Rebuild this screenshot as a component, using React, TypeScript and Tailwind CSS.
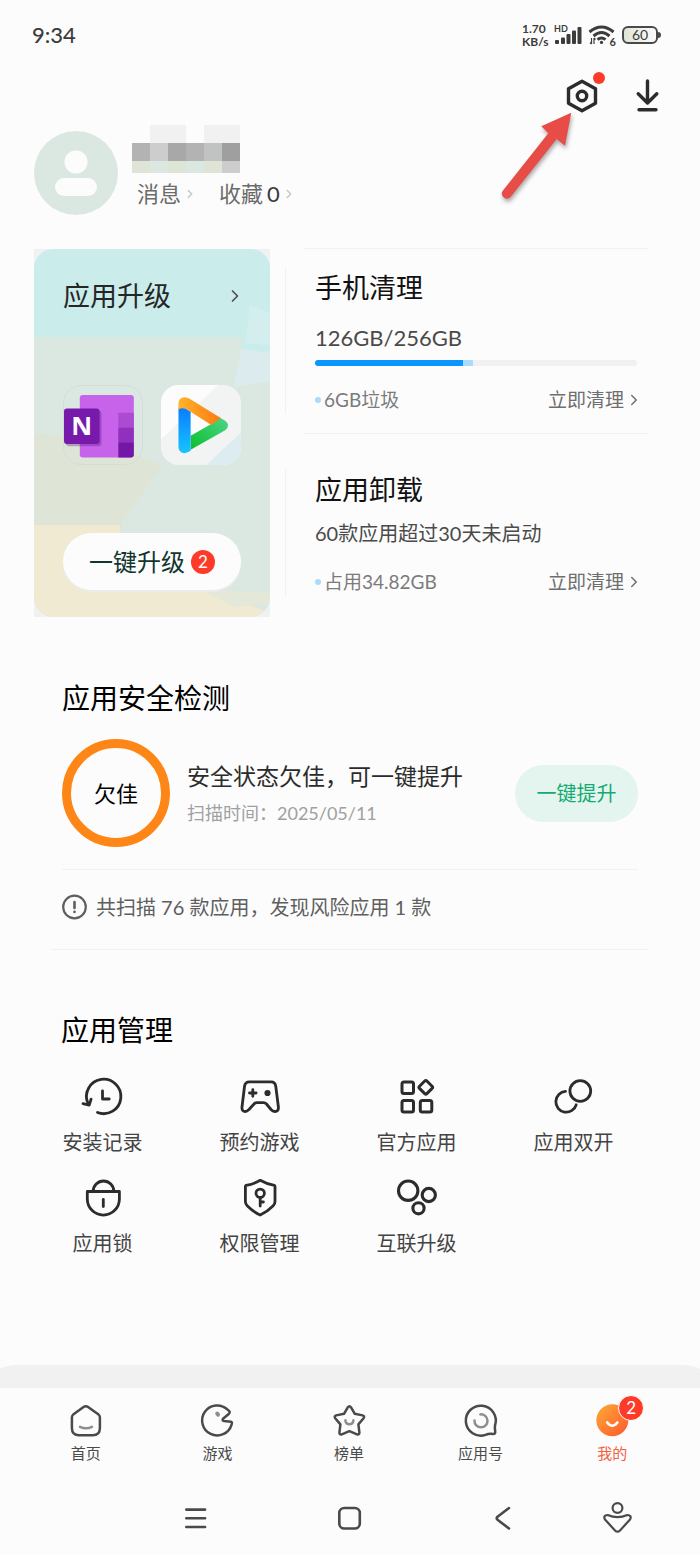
import React from 'react';
import { ChevronRight } from 'lucide-react';

const MOSAIC_ROWS = [
  ['', '#f1f1f1', '#f1f1f1', '', '#f1f1f1', '#f1f1f1'],
  ['#b3b3b3', '#cdcdcd', '#a8a8a8', '#b3b3b3', '#c0c3c2', '#9f9f9f'],
  ['#dfe5d6', '#dbe8e1', '#dfe5d6', '#dbe8e1', '#dfe5d6', '#cdcdcd'],
];

const USED_PERCENT = 46;
const JUNK_PERCENT = 3;

const TOOLS = [
  {
    label: '安装记录',
    icon: (
      <>
        <path d="M16.5 37.5A17.2 17.2 0 1 0 7 28.5" />
        <path d="M2 28.6l6.2 1.6 1.9-6M21.5 16v8h6.7" />
      </>
    ),
  },
  {
    label: '预约游戏',
    icon: (
      <>
        <path d="M11.5 6.8H33Q37.3 6.8 37.8 11.5L40.4 32Q40.7 36.5 37 36.5 34.8 36.6 33 34.5L28.5 29Q27.2 27.6 25.5 27.6H19Q17.2 27.6 16 29L11 34.5Q9 36.6 7 36.5 3.6 36.2 4 32L6.5 11.5Q7 6.8 11.5 6.8Z" />
        <path d="M11.5 18h6.6M14.8 14.7v6.6" />
        <circle cx="29.5" cy="18" r="1.7" fill="currentColor" />
      </>
    ),
  },
  {
    label: '官方应用',
    icon: (
      <g strokeWidth="3">
        <rect x="7" y="7" width="11.5" height="11.5" rx="2" />
        <rect x="7" y="25.5" width="11.5" height="11.5" rx="2" />
        <rect x="25.3" y="25.5" width="11.5" height="11.5" rx="2" />
        <rect x="25.6" y="7.1" width="10.4" height="10.4" rx="1.5" transform="rotate(45 30.8 12.3)" />
      </g>
    ),
  },
  {
    label: '应用双开',
    icon: (
      <>
        <circle cx="28.3" cy="16" r="10.4" />
        <path d="M13.5 16.4A10.4 10.4 0 1 0 24.2 29.8" />
      </>
    ),
  },
  {
    label: '应用锁',
    icon: (
      <>
        <path d="M12.2 15.3a10.3 10.3 0 0 1 20.6 0M6.3 15.5H38.4V23A16 16 0 0 1 6.3 23Z" />
        <path d="M22.3 23.5v7" />
      </>
    ),
  },
  {
    label: '权限管理',
    icon: (
      <>
        <path d="M22.2 4.3Q29 8.3 36.4 9.3 37 9.5 37 10.5V25.5Q37 28 35.2 29.7 29 36 22.2 39 15.4 36 9.2 29.7 7.4 28 7.4 25.5V10.5Q7.4 9.5 8 9.3 15.4 8.3 22.2 4.3Z" />
        <circle cx="22.2" cy="17.3" r="4.2" />
        <path d="M22.2 21.5V30M22.2 26H25.4" />
      </>
    ),
  },
  {
    label: '互联升级',
    icon: (
      <g strokeWidth="3.1">
        <circle cx="13.2" cy="14.7" r="9.7" />
        <circle cx="33.8" cy="19" r="6.6" />
        <circle cx="23.5" cy="32.3" r="5.6" />
      </g>
    ),
  },
];

const TABS = [
  {
    label: '首页',
    icon: (
      <>
        <path d="M15.2 4.2Q17.8 2.3 20.4 4.2L30.6 11.6Q31.9 12.7 31.9 14.5V25Q31.9 32.2 24.8 32.2H11Q3.9 32.2 3.9 25V14.5Q3.9 12.7 5.2 11.6Z" />
        <path d="M12 23.8Q18 26.8 24 23.8" stroke="#8e8e8e" />
      </>
    ),
  },
  {
    label: '游戏',
    icon: (
      <>
        <path d="M28.6 6.7Q32 8.8 30 10.7L24 15.8Q22.8 17.6 25 18L32 18.8Q33.6 19.2 32.5 21.8A15 15 0 1 1 28.6 6.7Z" />
        <path d="M18.2 10.6l.8 1" stroke="#8e8e8e" strokeWidth="4" />
      </>
    ),
  },
  {
    label: '榜单',
    icon: (
      <>
        <path d="M16.9 4.2Q18.4 2.2 19.9 4.2L23.8 10.8 31.6 12.4Q34 13.2 32.6 15.2L27.4 21.4 28.4 29.6Q28.3 32 26 31.3L18.4 28.2 10.8 31.3Q8.5 32 8.4 29.6L9.4 21.4 4.2 15.2Q2.8 13.2 5.2 12.4L13 10.8Z" />
        <path d="M14.4 17.3Q14.8 21.2 18.4 21.2T22.4 17.3" stroke="#8e8e8e" />
      </>
    ),
  },
  {
    label: '应用号',
    icon: (
      <>
        <path d="M32 22.5Q31.6 25 32.2 28.5 32.6 31 30 31 26 30.4 22.5 31.9A15 15 0 1 1 32 22.5Z" />
        <path d="M17.3 11.4A6.5 6.5 0 1 1 11.5 17.5" stroke="#8e8e8e" />
      </>
    ),
  },
];

function StatusBar() {
  return (
    <div className="flex h-[70px] items-center justify-between pr-[39px] pl-8 text-[#3c3c3c]">
      <span className="text-[22px] leading-7 font-medium">9:34</span>
      <div className="flex items-center">
        <div className="flex w-8 flex-col font-[Lato] text-[12px] leading-[13px] font-bold">
          <span>1.70</span>
          <span>KB/s</span>
        </div>
        <div className="relative">
          <svg className="block h-5 w-[30px]" viewBox="0 0 30 20" fill="currentColor">
            <rect x="1" y="15" width="4" height="4" rx="1" />
            <rect x="7" y="12.5" width="4" height="6.5" rx="1" />
            <rect x="12.5" y="9" width="4" height="10" rx="1" />
            <rect x="18" y="5.5" width="4" height="13.5" rx="1" />
            <rect x="23.5" y="2" width="4" height="17" rx="1" />
          </svg>
          <span className="absolute top-0 left-0 text-[9px] leading-2 font-bold">HD</span>
        </div>
        <div className="relative ml-1">
          <svg className="block h-5 w-7" viewBox="0 0 28 20" fill="none" stroke="currentColor" strokeWidth="3">
            <path d="M1.5 7Q13.5-3 25.5 7M5.5 11Q13.5 4 21.5 11M9.5 14.6Q13.5 11.4 17.5 14.6" />
            <circle cx="13.5" cy="17.4" r="1.6" fill="currentColor" stroke="none" />
            <path d="M3.5 13v6M2 17.5l1.5 1.5M6 19v-6M7.5 14.5L6 13" strokeWidth="1.2" />
          </svg>
          <span className="absolute right-0 -bottom-px text-[11px] leading-2 font-bold">6</span>
        </div>
        <div className="ml-1.5 flex items-center">
          <span className="flex h-[18px] w-9 items-center justify-center rounded-[6px] border-2 border-[#4a4a4a] bg-linear-to-r from-[#dfe5d6] to-transparent text-[14px] leading-4">60</span>
          <span className="h-1.5 w-[3px] rounded-r-sm bg-[#4a4a4a]" />
        </div>
      </div>
    </div>
  );
}

function Profile() {
  return (
    <section className="mt-1 flex items-end gap-3.5 px-[34px]">
      <svg className="block size-[84px]" viewBox="0 0 84 84">
        <circle cx="42" cy="42" r="42" fill="#dbe8e1" />
        <circle cx="42" cy="31" r="11.5" fill="#fcfcfc" />
        <rect x="21" y="47" width="42" height="18" rx="9" fill="#fcfcfc" />
      </svg>
      <div className="pb-[7px]">
        <div className="grid w-[108px] grid-cols-6 grid-rows-[18px_18px_12px]">
          {MOSAIC_ROWS.flat().map((color, i) => (
            <span key={i} style={{ backgroundColor: color || 'transparent' }} />
          ))}
        </div>
        <div className="mt-[7px] flex gap-[22px] pl-[5px] text-[22px] leading-7 text-[#6b6b6b]">
          <a href="#messages" className="flex items-center gap-0.5">
            消息
            <ChevronRight className="size-3.5 text-[#c3c9c3]" strokeWidth={2.5} />
          </a>
          <a href="#favorites" className="flex items-center gap-0.5">
            收藏
            <span className="ml-0.5 text-[#3a3a3a]">0</span>
            <ChevronRight className="size-3.5 text-[#c3c9c3]" strokeWidth={2.5} />
          </a>
        </div>
      </div>
    </section>
  );
}

function UpgradeCard() {
  return (
    <section className="bg-[#f1f1f1]">
      <div className="relative flex h-full flex-col overflow-hidden rounded-[20px] px-[29px] pt-[27px] pb-[27px]">
        <svg className="absolute inset-0 h-full w-full" viewBox="0 0 236 368" preserveAspectRatio="none">
          <rect width="236" height="368" fill="#dbe8e1" />
          <path d="M0 0H236V102L208 106V88H0Z" fill="#caeceb" />
          <path d="M216 56L236 64V96L211 94Z" fill="#d3eeed" />
          <path d="M207 100L236 104V132L200 138Z" fill="#dcecee" />
          <path d="M0 184L60 190 128 216 90 272 84 288H0Z" fill="#dfe5d6" />
          <path d="M0 276H86V290L180 342 236 364V368H0Z" fill="#efead1" />
          <path d="M166 340L236 344V354L200 358Z" fill="#e4e8d8" />
        </svg>
        <a href="#upgrade" className="relative flex h-10 items-center justify-between text-[27px] text-[#262626]">
          应用升级
          <ChevronRight className="-mr-1 size-5 text-[#4d4d4d]" strokeWidth={2} />
        </a>
        <div className="relative mt-[69px] flex justify-between">
          <svg className="size-20" viewBox="0 0 81 81">
            <rect x=".5" y=".5" width="80" height="80" rx="18" fill="none" stroke="#d3dcd5" />
            <rect x="17" y="10" width="54.7" height="63.3" rx="3" fill="#c763ea" />
            <path d="M56 28h15.7v15H56z" fill="#ac4bd2" />
            <path d="M56 43h15.7v15H56z" fill="#9030bc" />
            <path d="M56 58h15.7v12.3a3 3 0 0 1-3 3H56z" fill="#7318a6" />
            <rect x="3" y="26" width="36" height="36" rx="3" fill="#5b1a80" opacity=".35" />
            <rect x="1" y="23.7" width="36" height="36" rx="3" fill="#7719aa" />
            <text x="19" y="51" fill="#fff" fontFamily="Noto Sans" fontSize="26" fontWeight="700" textAnchor="middle">N</text>
          </svg>
          <svg className="size-20" viewBox="0 0 81 81">
            <defs>
              <linearGradient id="play-blue" x1="0" y1="0" x2="0" y2="1">
                <stop offset="0" stopColor="#087cff" />
                <stop offset="1" stopColor="#18c4ff" />
              </linearGradient>
              <linearGradient id="play-green" x1="0" y1="1" x2="1" y2="0">
                <stop offset="0" stopColor="#0abf2c" />
                <stop offset="1" stopColor="#4ed489" />
              </linearGradient>
              <linearGradient id="play-orange">
                <stop offset="0" stopColor="#ffb32b" />
                <stop offset="1" stopColor="#fd7a12" />
              </linearGradient>
            </defs>
            <rect width="81" height="81" rx="18" fill="#f2f3f3" />
            <path d="M0 55V18A18 18 0 0 1 18 0H58Z" fill="#fcfcfc" />
            <path d="M81 48V63A18 18 0 0 1 63 81H46Z" fill="#dcecf0" />
            <path d="M30 27L50 40.7 30 52Z" fill="#fcfcfc" />
            <path d="M30 51.5L54 37.8 59.3 33 65 36.3Q71 41 65 45.8L30 65.5Z" fill="url(#play-green)" />
            <path d="M17.7 23V63A6.2 6.2 0 0 0 27 68.2L30 66.5V27L22 22Z" fill="url(#play-blue)" />
            <path d="M17.7 25V18.5Q18 12.5 24 12.3 26.5 12.4 29 13.8L60.5 33.5 51 40.5 30 27Q22 21.5 17.7 25Z" fill="url(#play-orange)" />
          </svg>
        </div>
        <button className="relative mt-[68px] flex h-[57px] items-center justify-center gap-1.5 rounded-full bg-[#fcfcfc] text-[24px] text-[#12352e] shadow-[0_2px_1px_#ebebeb]">
          一键升级
          <span className="flex size-6 items-center justify-center rounded-full bg-[#fe3b29] text-[17px] text-white">2</span>
        </button>
      </div>
    </section>
  );
}

function CardFooter({ text, href }: { text: string; href: string }) {
  return (
    <div className="flex h-7 items-center justify-between text-[19px] text-[#7b7b7b]">
      <span className="flex items-center gap-[3px]">
        <span className="size-1.5 rounded-full bg-[#a9dcfb]" />
        {text}
      </span>
      <a href={href} className="-mr-1.5 flex items-center gap-px text-[#6e6e6e]">
        立即清理
        <ChevronRight className="size-[18px]" />
      </a>
    </div>
  );
}

function CleanCards() {
  return (
    <div className="-mt-px flex flex-col gap-[15px]">
      <section className="relative px-[18px] before:absolute before:inset-y-5 before:left-0 before:w-px before:bg-[#f1f1f1]">
        <div className="border-y border-[#f1f1f1] px-3 pt-[21px] pb-[19px]">
          <h2 className="text-[27px] leading-9 text-[#111]">手机清理</h2>
          <p className="mt-[18px] text-[22px] leading-7 text-[#4a4a4a]">126GB/256GB</p>
          <div className="mt-2 flex h-1.5 overflow-hidden rounded-full bg-[#f1f1f1]">
            <span className="bg-[#0a96fb]" style={{ width: `${USED_PERCENT}%` }} />
            <span className="bg-[#a9dcfb]" style={{ width: `${JUNK_PERCENT}%` }} />
          </div>
          <div className="mt-5">
            <CardFooter text="6GB垃圾" href="#clean" />
          </div>
        </div>
      </section>
      <section className="relative px-[30px] pt-[23px] pb-[21px] before:absolute before:inset-y-5 before:left-0 before:w-px before:bg-[#f1f1f1]">
        <h2 className="text-[27px] leading-9 text-[#111]">应用卸载</h2>
        <p className="mt-[11px] text-[20px] leading-7 text-[#4a4a4a]">60款应用超过30天未启动</p>
        <div className="mt-[21px]">
          <CardFooter text="占用34.82GB" href="#uninstall" />
        </div>
      </section>
    </div>
  );
}

function SecurityCard() {
  return (
    <section className="mx-[51px] border-b border-[#f1f1f1] px-[11px] pt-[61px] pb-7">
      <h2 className="text-[28px] leading-10 text-black">应用安全检测</h2>
      <div className="mt-[21px] flex items-center">
        <div className="flex size-[108px] items-center justify-center rounded-full border-[9px] border-[#fe8616] text-[22px] text-black">欠佳</div>
        <div className="ml-[17px] flex-1">
          <p className="text-[23px] leading-8 text-[#2b2b2b]">安全状态欠佳，可一键提升</p>
          <p className="mt-[7px] text-[18px] leading-7 text-[#a0a0a0]">扫描时间：2025/05/11</p>
        </div>
        <button className="h-[57px] w-[123px] rounded-full bg-[#e4f5f0] text-[20px] text-[#13ab70]">一键提升</button>
      </div>
      <div className="mt-[22px] flex items-center gap-2 border-t border-[#f1f1f1] pt-[23px] text-[20px] leading-7 text-[#5f5f5f]">
        <svg className="size-[26px]" viewBox="0 0 26 26" fill="none" stroke="currentColor" strokeWidth="2.2" strokeLinecap="round">
          <circle cx="12.5" cy="13" r="11.3" />
          <path d="M12.5 8v6M12.5 17.8v.2" strokeWidth="2.6" />
        </svg>
        共扫描 76 款应用，发现风险应用 1 款
      </div>
    </section>
  );
}

function Tools() {
  return (
    <section className="pt-[60px]">
      <h2 className="px-[61px] text-[28px] leading-10 text-black">应用管理</h2>
      <div className="mt-[25px] grid grid-cols-4 gap-y-5 pr-12 pl-6">
        {TOOLS.map(({ label, icon }) => (
          <button key={label} className="flex flex-col items-center gap-[9px] text-[20px] leading-7 text-[#444]">
            <svg className="size-11 text-[#2c2c2c]" viewBox="0 0 44 44" fill="none" stroke="currentColor" strokeWidth="2.8" strokeLinecap="round" strokeLinejoin="round">
              {icon}
            </svg>
            {label}
          </button>
        ))}
      </div>
    </section>
  );
}

function TabBar() {
  return (
    <nav className="grid grid-cols-5 pt-[15px] pr-[22px] pl-5 text-[15px] leading-5 text-[#4a4a4a]">
      {TABS.map(({ label, icon }) => (
        <a key={label} href="#tab" className="flex flex-col items-center gap-1">
          <svg className="size-9" viewBox="0 0 36 36" fill="none" stroke="currentColor" strokeWidth="2.5" strokeLinecap="round" strokeLinejoin="round">
            {icon}
          </svg>
          {label}
        </a>
      ))}
      <a href="#mine" className="flex flex-col items-center gap-1 text-[#f4603c]">
        <span className="relative">
          <svg className="block size-9" viewBox="0 0 36 36" fill="none">
            <defs>
              <linearGradient id="mine" x1="0" y1="0" x2="1" y2="1">
                <stop offset="0.2" stopColor="#fe9a34" />
                <stop offset="0.9" stopColor="#fd5f2f" />
              </linearGradient>
            </defs>
            <circle cx="18.3" cy="17.3" r="16" fill="url(#mine)" />
            <path d="M13.2 19.5Q18.3 26 23.4 19.5" stroke="#fff" strokeWidth="2.6" strokeLinecap="round" />
          </svg>
          <span className="absolute -top-2 left-6 flex size-[26px] items-center justify-center rounded-full border border-white bg-[#fe3b29] text-[17px] text-white">2</span>
        </span>
        我的
      </a>
    </nav>
  );
}

function SystemIcon({ label, children }: { label: string; children: React.ReactNode }) {
  return (
    <button aria-label={label}>
      <svg className="block size-8" viewBox="0 0 32 32" fill="none" stroke="currentColor" strokeWidth="2.6" strokeLinecap="round" strokeLinejoin="round">
        {children}
      </svg>
    </button>
  );
}

function SystemNav() {
  return (
    <div className="mt-[39px] grid grid-cols-[2fr_2fr_2fr_1fr] justify-items-center pr-[45px] pb-[21px] pl-[120px] text-[#4a4a4a]">
      <SystemIcon label="菜单">
        <path d="M6.3 7.6h18.8M6.3 16.3h18.8M6.3 25h18.8" />
      </SystemIcon>
      <SystemIcon label="主屏幕">
        <rect x="6.3" y="6" width="20.5" height="20.5" rx="5" />
      </SystemIcon>
      <SystemIcon label="返回">
        <path d="M23 6L11.5 14.7Q10 16.2 11.5 17.7L23 26.5" />
      </SystemIcon>
      <SystemIcon label="无障碍">
        <g strokeWidth="2.2">
          <circle cx="16.5" cy="6" r="4.9" />
          <path d="M6.7 13Q16.5 17.4 26.3 13 31.3 13.4 29 17.6L19 28.4Q16.5 31 14 28.4L4 17.6Q1.7 13.4 6.7 13Z" />
        </g>
      </SystemIcon>
    </div>
  );
}

function App() {
  return (
    <div className="flex min-h-screen flex-col bg-[#fcfcfc] font-[Lato,'Noto_Sans_CJK_SC',sans-serif]">
      <StatusBar />
      <header className="relative flex h-[51px] items-center justify-end gap-[34px] pr-[38px] text-[#2c2c2c]">
        <button aria-label="设置" className="relative">
          <svg className="block size-9" viewBox="0 0 36 36" fill="none" stroke="currentColor" strokeWidth="3.4" strokeLinejoin="round">
            <path d="M18 3.2L31.5 10.7V25.3L18 32.8 4.5 25.3V10.7Z" />
            <circle cx="18" cy="18" r="4.7" />
          </svg>
          <span className="absolute -top-1.5 -right-[5px] size-3 rounded-full bg-[#fe3b29]" />
        </button>
        <button aria-label="下载">
          <svg className="block h-9 w-7" viewBox="0 0 28 36" fill="none" stroke="currentColor" strokeWidth="3.4" strokeLinecap="round" strokeLinejoin="round">
            <path d="M13.5 3V24.5M4.2 15.8L13.5 25 22.8 15.8M5 31.7H22" />
          </svg>
        </button>
        <svg className="absolute top-9 right-[120px] h-24 w-[84px] drop-shadow-[1px_3px_2px_#00000055]" viewBox="0 0 84 96">
          <path d="M75.3 6.7L45.3 20.3 52.3 27.3 6.8 84.8A5 5 0 0 0 14.6 91L60.7 33 69 39.7Z" fill="#e84c47" />
        </svg>
      </header>
      <main className="flex-1">
        <Profile />
        <div className="mt-[34px] grid grid-cols-[236fr_382fr] gap-[15px] pr-[33px] pl-[34px]">
          <UpgradeCard />
          <CleanCards />
        </div>
        <SecurityCard />
        <Tools />
      </main>
      <footer>
        <div className="h-[23px] rounded-t-[20px_5px] bg-[#f1f1f1]" />
        <TabBar />
        <SystemNav />
      </footer>
    </div>
  );
}
export default App;
